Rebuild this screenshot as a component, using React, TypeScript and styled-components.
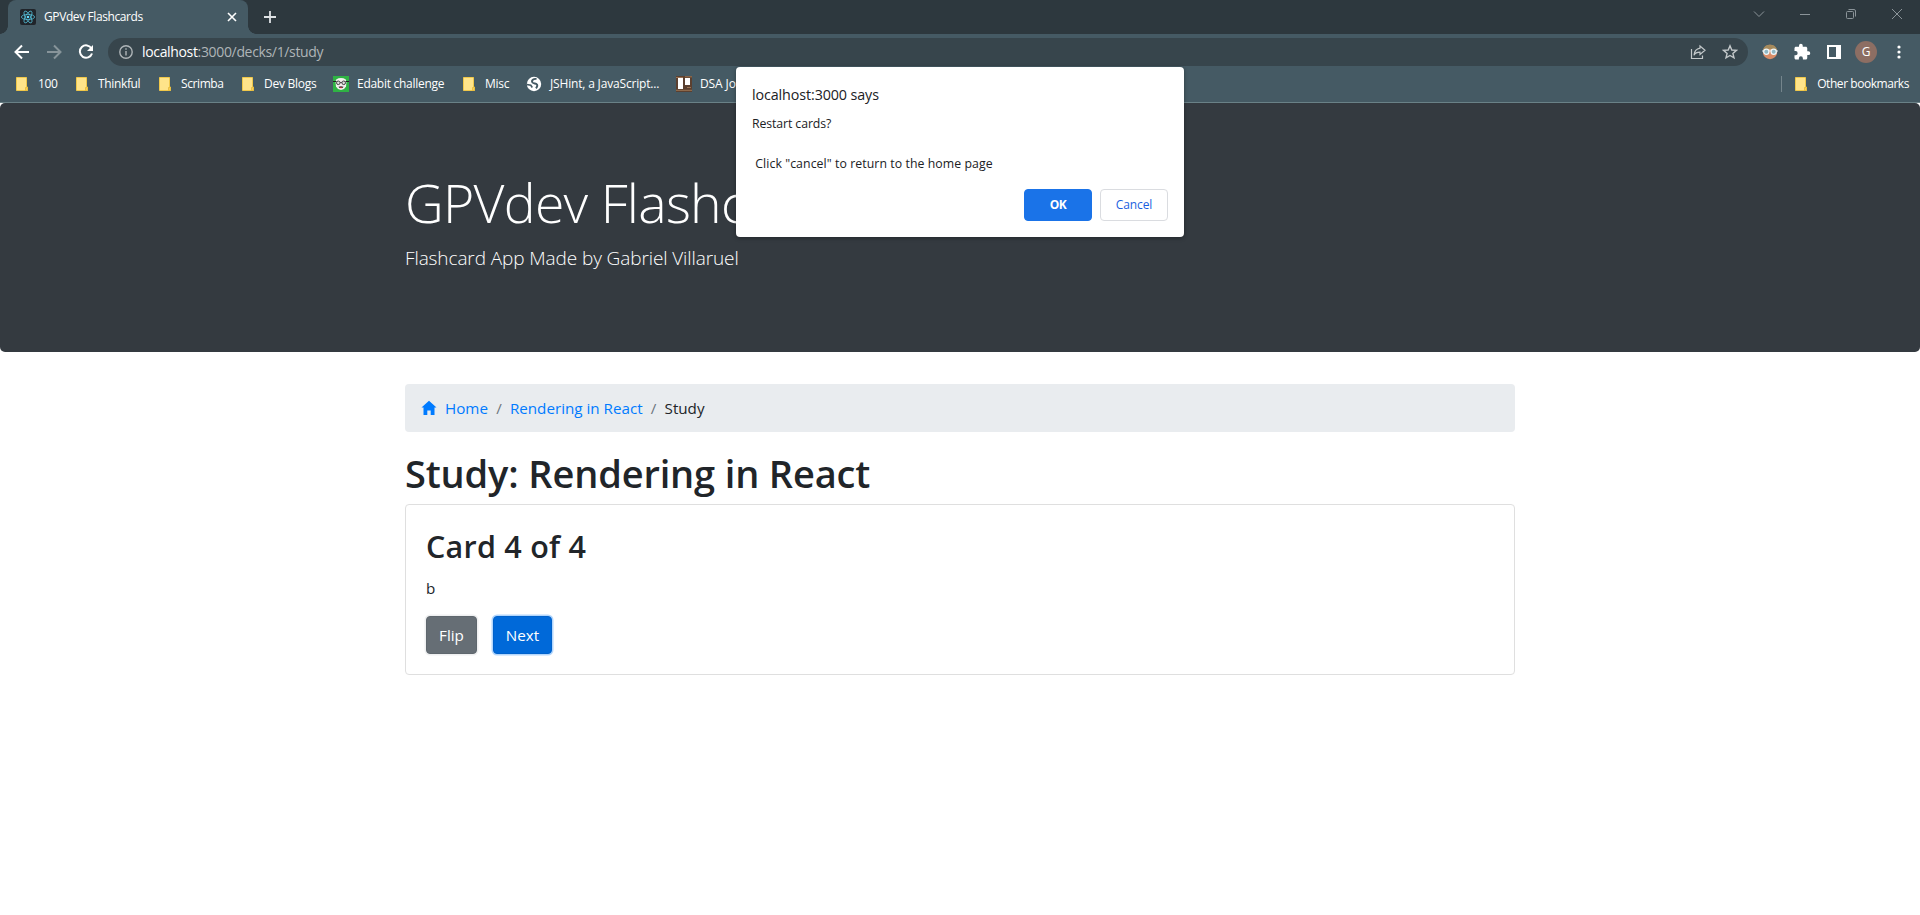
import React from "react";
import styled, { createGlobalStyle } from "styled-components";

const Global = createGlobalStyle`
  *, *::before, *::after { box-sizing: border-box; }
  body { margin: 0; background: #fff; color: #212529; font: 400 16px/1.5 "Open Sans", "Noto Sans", sans-serif; overflow: hidden; }
  h1, h2, p, ol { margin: 0; padding: 0; }
  svg { display: block; flex: none; }
`;

const Text = styled.span<{ $ls?: number }>`
  letter-spacing: ${(p) => p.$ls ?? 0}px;
  white-space: pre;
`;

const Window = styled.div`
  height: 915px;
  display: flex;
  flex-direction: column;
  background: #fff;
`;
const Chrome = styled.header`
  flex: none;
  height: 103px;
  background: #455a64;
  border-bottom: 1px solid #6a8187;
  color: #fff;
  font-size: 12px;
`;
const TabStrip = styled.div`
  height: 34px;
  background: #2d383e;
  display: flex;
  align-items: center;
  padding-left: 8px;
`;
const Tab = styled.div`
  position: relative;
  width: 240px;
  height: 34px;
  padding: 0 10px 0 12px;
  border-radius: 8px 8px 0 0;
  background: #455a64;
  display: flex;
  align-items: center;
  gap: 8px;
  &::before, &::after {
    content: "";
    position: absolute;
    bottom: 0;
    width: 8px;
    height: 8px;
  }
  &::before { left: -8px; background: radial-gradient(circle at 0 0, #2d383e 7.5px, #455a64 8px); }
  &::after { right: -8px; background: radial-gradient(circle at 100% 0, #2d383e 7.5px, #455a64 8px); }
`;
const TabTitle = styled.div`
  flex: 1;
`;
const NewTab = styled.div`
  margin-left: 16px;
`;
const WindowButtons = styled.div`
  margin-left: auto;
  padding: 0 17px 6px 0;
  display: flex;
  align-items: center;
  gap: 34px;
`;
const Toolbar = styled.div`
  height: 36px;
  display: flex;
  align-items: center;
  padding: 0 13px 0 14px;
`;
const NavButtons = styled.div`
  display: flex;
  gap: 16px;
  width: 94px;
`;
const AddressBar = styled.div`
  flex: 1;
  height: 28px;
  border-radius: 14px;
  background: #37454c;
  display: flex;
  align-items: center;
  padding: 0 10px 0 11px;
  font-size: 14px;
  color: #afb5b8;
  b { font-weight: 400; color: #fff; }
`;
const Url = styled.div`
  flex: 1;
  padding: 0 0 1px 9px;
`;
const AddressActions = styled.div`
  display: flex;
  gap: 16px;
`;
const Extensions = styled.div`
  display: flex;
  align-items: center;
  gap: 15px;
  margin-left: 14px;
`;
const Avatar = styled.div`
  width: 22px;
  height: 22px;
  margin: 0 -1px 0 -2px;
  border-radius: 50%;
  background: #8d6e63;
  font-size: 12px;
  line-height: 22px;
  text-align: center;
`;
const Bookmarks = styled.div`
  height: 32px;
  padding: 0 11px 5px 14px;
  display: flex;
  align-items: center;
`;
const Bookmark = styled.div<{ $w?: number }>`
  display: flex;
  align-items: center;
  gap: 8px;
  width: ${(p) => (p.$w ? p.$w + "px" : "auto")};
  flex: none;
`;
const OtherBookmarks = styled.div`
  margin-left: auto;
  padding-left: 11px;
  height: 16px;
  border-left: 1px solid #75858c;
  display: flex;
  align-items: center;
`;

const Jumbotron = styled.section`
  flex: none;
  height: 249px;
  padding: 66px 0 0;
  border-radius: 5px;
  background: #343a40;
  color: #fff;
`;
const Container = styled.div`
  width: 1110px;
  margin: 0 auto;
`;
const Display = styled.h1`
  font-size: 53.5px;
  font-weight: 300;
  line-height: 67px;
  margin-bottom: 7px;
`;
const Lead = styled.p`
  font-size: 19px;
  font-weight: 300;
  line-height: 30px;
`;
const Breadcrumb = styled.ol`
  margin: 32px 0 17px;
  height: 48px;
  border-radius: 4px;
  background: #e9ecef;
  display: flex;
  align-items: center;
  padding: 0 16px;
  list-style: none;
`;
const Crumb = styled.li<{ $link?: boolean }>`
  display: flex;
  align-items: center;
  gap: 8px;
  color: ${(p) => (p.$link ? "#007bff" : "#212529")};
  font-size: 15.2px;
`;
const Slash = styled.span`
  color: #6c757d;
  padding: 0 8.2px;
  font-size: 15.2px;
`;
const Title = styled.h1`
  font-size: 38px;
  font-weight: 600;
  line-height: 48px;
  margin-bottom: 7px;
`;
const Card = styled.article`
  height: 171px;
  padding: 21px 20px;
  border: 1px solid #dfdfdf;
  border-radius: 4px;
`;
const CardTitle = styled.h2`
  font-size: 30.5px;
  font-weight: 600;
  line-height: 40px;
  margin-bottom: 10px;
`;
const CardText = styled.p`
  font-size: 15.2px;
  line-height: 24px;
  margin-bottom: 16px;
`;
const Actions = styled.div`
  display: flex;
  gap: 16px;
`;
const Button = styled.button<{ $primary?: boolean }>`
  width: ${(p) => (p.$primary ? 59 : 51)}px;
  height: 38px;
  padding: 0;
  border: 1px solid ${(p) => (p.$primary ? "#0062cc" : "#5f676e")};
  border-radius: 4px;
  background: ${(p) => (p.$primary ? "#0069d9" : "#666e75")};
  box-shadow: 0 0 0 1.5px ${(p) => (p.$primary ? "#b3d6fc" : "#eff0f1")};
  color: #fff;
  font: 400 15.2px "Open Sans", sans-serif;
`;

const Dialog = styled.div`
  position: absolute;
  left: 736px;
  top: 67px;
  width: 448px;
  height: 170px;
  padding: 17px 16px 16px;
  border-radius: 4px;
  background: #fff;
  box-shadow: 0 1px 4px rgba(0, 0, 0, 0.35);
  color: #202124;
  display: flex;
  flex-direction: column;
`;
const DialogTitle = styled.div`
  font-size: 14.3px;
  line-height: 22px;
  margin-bottom: 8px;
`;
const DialogText = styled.div`
  font-size: 12.3px;
  line-height: 20px;
  white-space: pre;
`;
const DialogActions = styled.div`
  margin-top: auto;
  display: flex;
  justify-content: flex-end;
  gap: 8px;
`;
const DialogButton = styled.button<{ $primary?: boolean }>`
  width: 68px;
  height: 32px;
  padding: 0 0 2px;
  border-radius: 4px;
  border: 1px solid ${(p) => (p.$primary ? "#1a73e8" : "#dadce0")};
  background: ${(p) => (p.$primary ? "#1a73e8" : "#fff")};
  color: ${(p) => (p.$primary ? "#fff" : "#1a5fe0")};
  font: ${(p) => (p.$primary ? 700 : 500)} 12px "Open Sans", sans-serif;
`;

const ReactLogo = () => (
  <svg width="16" height="16" viewBox="0 0 16 16" fill="none" stroke="#53b9d2" strokeWidth=".8">
    <rect width="16" height="16" rx="2" fill="#20242a" stroke="none" />
    {[0, 60, 120].map((a) => (
      <ellipse key={a} cx="8" cy="8" rx="6.6" ry="2.6" transform={`rotate(${a} 8 8)`} />
    ))}
    <circle cx="8" cy="8" r="1.3" fill="#61dafb" stroke="none" />
  </svg>
);
const Folder = () => (
  <svg width="16" height="16" viewBox="0 0 16 16">
    <path d="M2.5 1.5h10v9.5h1v3.5h-11z" fill="#ffe48a" stroke="#f0c84a" />
    <path d="M11.5 14.5v-3h1.8v3z" fill="#ffd65c" stroke="#e5b93a" strokeWidth=".8" />
  </svg>
);
const Edabit = () => (
  <svg width="16" height="16" viewBox="0 0 16 16">
    <path d="M0 0h16v16H0z" fill="#2fb344" />
    <path d="M2.5 6l.7-2.5L5.500 2.300 8 2l2.500.3 2.300 1.200.7 2.500-.5 4.500-2 2.500-3 1-3-1-2-2.500z" fill="#f3efee" />
    <path d="M0 5.500h3.500M12.500 5.500H16M7.300 6.500h1.400" stroke="#222" />
    <circle cx="5.3" cy="6.8" r="1.8" fill="#ddd" stroke="#333" strokeWidth=".9" />
    <circle cx="10.7" cy="6.8" r="1.8" fill="#ddd" stroke="#333" strokeWidth=".9" />
    <path d="M5.500 10.800q2.500-1.200 5 0l-1 1.200h-3z" fill="#333" />
    <path d="M7.200 11.700h1.600" stroke="#e33" />
  </svg>
);
const JsHint = () => (
  <svg width="16" height="16" viewBox="0 0 16 16">
    <circle cx="8" cy="8" r="7.2" fill="#fff" />
    <path d="M10.500 3C7.500 2.500 5 4.500 6.500 6.500c1 1.200 3.500.8 4.500 2 .8 1.200 0 2.500-1 3.800" fill="none" stroke="#455a64" strokeWidth="1.9" />
    <path d="M.8 8.500l4 .8 1.500 2.200" fill="none" stroke="#455a64" strokeWidth="1.6" />
  </svg>
);
const Trello = () => (
  <svg width="16" height="16" viewBox="0 0 16 16">
    <path d="M0 0h16v16H0z" fill="#5b4030" />
    <path d="M0 1.500h7M9 .8h7M0 14.300h16M11 11.500h4" stroke="#9c7453" />
    <path d="M2 2h5v11H2zM9 2h5v7H9z" fill="#fff" />
  </svg>
);

const bookmarks: { label: string; icon: React.ReactNode; w: number; ls: number }[] = [
  { label: "100", icon: <Folder />, w: 60, ls: -0.4 },
  { label: "Thinkful", icon: <Folder />, w: 83, ls: -0.35 },
  { label: "Scrimba", icon: <Folder />, w: 83, ls: -0.4 },
  { label: "Dev Blogs", icon: <Folder />, w: 93, ls: -0.25 },
  { label: "Edabit challenge", icon: <Edabit />, w: 128, ls: -0.28 },
  { label: "Misc", icon: <Folder />, w: 65, ls: -0.3 },
  { label: "JSHint, a JavaScript...", icon: <JsHint />, w: 150, ls: -0.17 },
  { label: "DSA Jo", icon: <Trello />, w: 60, ls: -0.1 },
];

export default function App() {
  return (
    <Window>
      <Global />
      <Chrome>
        <TabStrip>
          <Tab>
            <ReactLogo />
            <TabTitle><Text $ls={-0.4}>GPVdev Flashcards</Text></TabTitle>
            <svg width="12" height="12" viewBox="0 0 12 12" stroke="#fff" strokeWidth="1.6"><path d="M2 2l8 8M10 2l-8 8" /></svg>
          </Tab>
          <NewTab>
            <svg width="12" height="12" viewBox="0 0 12 12" stroke="#dfe3e5" strokeWidth="1.8"><path d="M6 0v12M0 6h12" /></svg>
          </NewTab>
          <WindowButtons>
            <svg width="12" height="12" viewBox="0 0 12 12" fill="none" stroke="#8b9499"><path d="M1 3.500l5 5 5-5" /></svg>
            <svg width="12" height="12" viewBox="0 0 12 12" stroke="#8b9499"><path d="M1 6.500h10" /></svg>
            <svg width="12" height="12" viewBox="0 0 12 12" fill="none" stroke="#8b9499"><rect x="1.5" y="3.5" width="7" height="7" rx="1" /><path d="M3.500 1.500h5.500q1.500 0 1.500 1.500v5.500" /></svg>
            <svg width="12" height="12" viewBox="0 0 12 12" stroke="#8b9499"><path d="M1 1l10 10M11 1L1 11" /></svg>
          </WindowButtons>
        </TabStrip>
        <Toolbar>
          <NavButtons>
            <svg width="16" height="16" viewBox="0 0 16 16" fill="none" stroke="#fff" strokeWidth="2"><path d="M15 8H2.500M8 1.500L1.500 8 8 14.500" /></svg>
            <svg width="16" height="16" viewBox="0 0 16 16" fill="none" stroke="#87949a" strokeWidth="2"><path d="M1 8h12.500M8 1.500L14.500 8 8 14.500" /></svg>
            <svg width="16" height="16" viewBox="0 0 16 16" fill="none" stroke="#fff" strokeWidth="2"><path d="M13.500 4.500A6.200 6.200 0 1 0 14 9.500" /><path d="M15 1v6H9z" fill="#fff" stroke="none" /></svg>
          </NavButtons>
          <AddressBar>
            <svg width="14" height="14" viewBox="0 0 14 14" fill="none" stroke="#afb5b8" strokeWidth="1.4"><circle cx="7" cy="7" r="6.2" /><path d="M7 6v4.500M7 3.300v1.500" /></svg>
            <Url><Text $ls={-0.34}><b>localhost</b>:3000/decks/1/study</Text></Url>
            <AddressActions>
              <svg width="16" height="16" viewBox="0 0 16 16" fill="none" stroke="#c3c8ca" strokeWidth="1.2"><path d="M1.500 5v9.500h11V11.500" /><path d="M10 2l5 4.200-5 4.200V8.200q-4.500 0-6 3 .5-6 6-7z" /></svg>
              <svg width="16" height="16" viewBox="0 0 16 16" fill="none" stroke="#c3c8ca" strokeWidth="1.4"><path d="M8 1.800l1.800 4.200 4.600.4-3.500 3 1.100 4.500L8 11.500l-4 2.400 1.100-4.500-3.500-3L6.200 6z" /></svg>
            </AddressActions>
          </AddressBar>
          <Extensions>
            <svg width="16" height="16" viewBox="0 0 16 16"><circle cx="8" cy="8" r="7.2" fill="#d98d68" /><path d="M1 6C2 2 5 .8 8 .8S14 2 15 6z" fill="#a58a5c" /><path d="M5 5h6v2H5z" fill="#e0a37c" /><path d="M0 7h16" stroke="#dbeaf0" /><circle cx="4.3" cy="7.8" r="2.6" fill="#8fb7c4" stroke="#eef7fa" strokeWidth="1.2" /><circle cx="11.7" cy="7.8" r="2.6" fill="#8fb7c4" stroke="#eef7fa" strokeWidth="1.2" /></svg>
            <svg width="18" height="18" viewBox="0 0 24 24" fill="#fff"><path d="M20.500 11H19V7c0-1.100-.9-2-2-2h-4V3.500a2.500 2.500 0 0 0-5 0V5H4c-1.100 0-2 .9-2 2v3.800h1.500a2.700 2.700 0 0 1 0 5.400H2V20c0 1.100.9 2 2 2h3.800v-1.500a2.700 2.700 0 0 1 5.400 0V22H17c1.100 0 2-.9 2-2v-4h1.500a2.500 2.500 0 0 0 0-5z" /></svg>
            <svg width="16" height="16" viewBox="0 0 16 16"><path d="M1 1h14v14H1z" fill="#fff" /><path d="M3 3h7v10H3z" fill="#455a64" /></svg>
            <Avatar>G</Avatar>
            <svg width="16" height="16" viewBox="0 0 16 16" fill="#fff"><circle cx="8" cy="3" r="1.6" /><circle cx="8" cy="8" r="1.6" /><circle cx="8" cy="13" r="1.6" /></svg>
          </Extensions>
        </Toolbar>
        <Bookmarks>
          {bookmarks.map((b) => (
            <Bookmark key={b.label} $w={b.w}>
              {b.icon}
              <Text $ls={b.ls}>{b.label}</Text>
            </Bookmark>
          ))}
          <OtherBookmarks>
            <Bookmark>
              <Folder />
              <Text $ls={-0.45}>Other bookmarks</Text>
            </Bookmark>
          </OtherBookmarks>
        </Bookmarks>
      </Chrome>
      <Jumbotron>
        <Container>
          <Display><Text $ls={-0.7}>GPVdev Flashcards</Text></Display>
          <Lead><Text $ls={-0.1}>Flashcard App Made by Gabriel Villaruel</Text></Lead>
        </Container>
      </Jumbotron>
      <Container>
        <Breadcrumb>
          <Crumb $link>
            <svg width="16" height="16" viewBox="0 0 16 16" fill="#007bff"><path d="M8 .8L15.500 7.500H13.500V15H9.700V10.500H6.300V15H2.500V7.500H.5z" /></svg>
            <Text>Home</Text>
          </Crumb>
          <Slash>/</Slash>
          <Crumb $link><Text>Rendering in React</Text></Crumb>
          <Slash>/</Slash>
          <Crumb><Text>Study</Text></Crumb>
        </Breadcrumb>
        <Title><Text $ls={-0.15}>Study: Rendering in React</Text></Title>
        <Card>
          <CardTitle><Text $ls={0.25}>Card 4 of 4</Text></CardTitle>
          <CardText>b</CardText>
          <Actions>
            <Button><Text>Flip</Text></Button>
            <Button $primary><Text>Next</Text></Button>
          </Actions>
        </Card>
      </Container>
      <Dialog>
        <DialogTitle><Text $ls={-0.1}>localhost:3000 says</Text></DialogTitle>
        <DialogText><Text $ls={-0.1}>Restart cards?</Text></DialogText>
        <DialogText> </DialogText>
        <DialogText><Text $ls={0.07}> Click "cancel" to return to the home page</Text></DialogText>
        <DialogActions>
          <DialogButton $primary><Text $ls={-0.5}>OK</Text></DialogButton>
          <DialogButton><Text $ls={-0.1}>Cancel</Text></DialogButton>
        </DialogActions>
      </Dialog>
    </Window>
  );
}
